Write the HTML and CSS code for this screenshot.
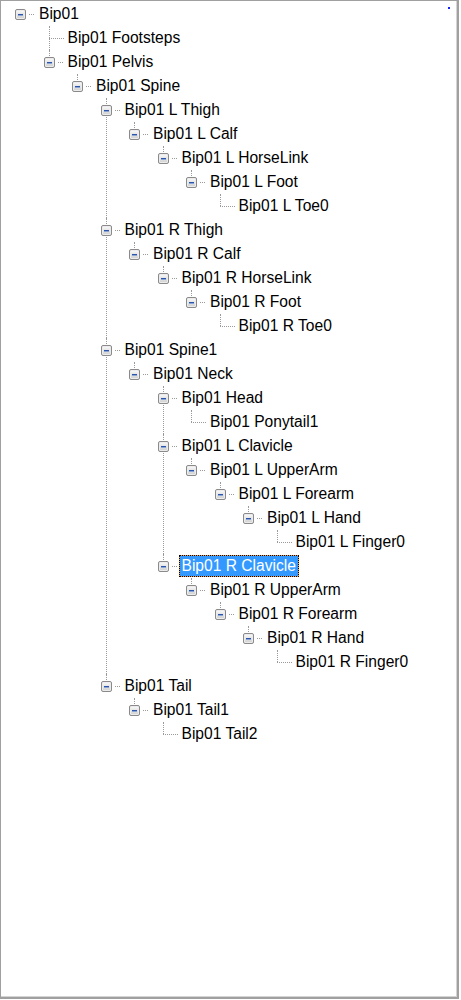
FILE: index.html
```html
<!DOCTYPE html>
<html>
<head>
<meta charset="utf-8">
<link rel="stylesheet" href="styles.css">
</head>
<body>
<div class="panel">
  <span class="marker"></span>
  <ul class="tree">
    <li><div class="row"><span class="box"></span><span class="conn"></span><span class="label">Bip01</span></div>
      <ul>
        <li><div class="row"><span class="stub"></span><span class="label">Bip01 Footsteps</span></div></li>
        <li><div class="row"><span class="box"></span><span class="conn"></span><span class="label">Bip01 Pelvis</span></div>
          <ul>
            <li><div class="row"><span class="box"></span><span class="conn"></span><span class="label">Bip01 Spine</span></div>
              <ul>
                <li><div class="row"><span class="box"></span><span class="conn"></span><span class="label">Bip01 L Thigh</span></div>
                  <ul>
                    <li><div class="row"><span class="box"></span><span class="conn"></span><span class="label">Bip01 L Calf</span></div>
                      <ul>
                        <li><div class="row"><span class="box"></span><span class="conn"></span><span class="label">Bip01 L HorseLink</span></div>
                          <ul>
                            <li><div class="row"><span class="box"></span><span class="conn"></span><span class="label">Bip01 L Foot</span></div>
                              <ul>
                                <li><div class="row"><span class="stub"></span><span class="label">Bip01 L Toe0</span></div></li>
                              </ul>
                            </li>
                          </ul>
                        </li>
                      </ul>
                    </li>
                  </ul>
                </li>
                <li><div class="row"><span class="box"></span><span class="conn"></span><span class="label">Bip01 R Thigh</span></div>
                  <ul>
                    <li><div class="row"><span class="box"></span><span class="conn"></span><span class="label">Bip01 R Calf</span></div>
                      <ul>
                        <li><div class="row"><span class="box"></span><span class="conn"></span><span class="label">Bip01 R HorseLink</span></div>
                          <ul>
                            <li><div class="row"><span class="box"></span><span class="conn"></span><span class="label">Bip01 R Foot</span></div>
                              <ul>
                                <li><div class="row"><span class="stub"></span><span class="label">Bip01 R Toe0</span></div></li>
                              </ul>
                            </li>
                          </ul>
                        </li>
                      </ul>
                    </li>
                  </ul>
                </li>
                <li><div class="row"><span class="box"></span><span class="conn"></span><span class="label">Bip01 Spine1</span></div>
                  <ul>
                    <li><div class="row"><span class="box"></span><span class="conn"></span><span class="label">Bip01 Neck</span></div>
                      <ul>
                        <li><div class="row"><span class="box"></span><span class="conn"></span><span class="label">Bip01 Head</span></div>
                          <ul>
                            <li><div class="row"><span class="stub"></span><span class="label">Bip01 Ponytail1</span></div></li>
                          </ul>
                        </li>
                        <li><div class="row"><span class="box"></span><span class="conn"></span><span class="label">Bip01 L Clavicle</span></div>
                          <ul>
                            <li><div class="row"><span class="box"></span><span class="conn"></span><span class="label">Bip01 L UpperArm</span></div>
                              <ul>
                                <li><div class="row"><span class="box"></span><span class="conn"></span><span class="label">Bip01 L Forearm</span></div>
                                  <ul>
                                    <li><div class="row"><span class="box"></span><span class="conn"></span><span class="label">Bip01 L Hand</span></div>
                                      <ul>
                                        <li><div class="row"><span class="stub"></span><span class="label">Bip01 L Finger0</span></div></li>
                                      </ul>
                                    </li>
                                  </ul>
                                </li>
                              </ul>
                            </li>
                          </ul>
                        </li>
                        <li><div class="row"><span class="box"></span><span class="conn"></span><span class="label selected">Bip01 R Clavicle</span></div>
                          <ul>
                            <li><div class="row"><span class="box"></span><span class="conn"></span><span class="label">Bip01 R UpperArm</span></div>
                              <ul>
                                <li><div class="row"><span class="box"></span><span class="conn"></span><span class="label">Bip01 R Forearm</span></div>
                                  <ul>
                                    <li><div class="row"><span class="box"></span><span class="conn"></span><span class="label">Bip01 R Hand</span></div>
                                      <ul>
                                        <li><div class="row"><span class="stub"></span><span class="label">Bip01 R Finger0</span></div></li>
                                      </ul>
                                    </li>
                                  </ul>
                                </li>
                              </ul>
                            </li>
                          </ul>
                        </li>
                      </ul>
                    </li>
                  </ul>
                </li>
                <li><div class="row"><span class="box"></span><span class="conn"></span><span class="label">Bip01 Tail</span></div>
                  <ul>
                    <li><div class="row"><span class="box"></span><span class="conn"></span><span class="label">Bip01 Tail1</span></div>
                      <ul>
                        <li><div class="row"><span class="stub"></span><span class="label">Bip01 Tail2</span></div></li>
                      </ul>
                    </li>
                  </ul>
                </li>
              </ul>
            </li>
          </ul>
        </li>
      </ul>
    </li>
  </ul>
</div>
</body>
</html>
```
FILE: styles.css
```css
html, body {
  margin: 0;
  padding: 0;
  background: #fff;
}

.panel {
  position: relative;
  box-sizing: border-box;
  width: 459px;
  height: 999px;
  border: 1px solid #a0a0a0;
  border-right-width: 2px;
  border-bottom-width: 2px;
  box-shadow: inset -1px -1px 0 #d4d4d4;
  background: #fff;
  padding: 1px 0 0 14px;
  font-family: "Liberation Sans", Arial, sans-serif;
  font-size: 15.6px;
  color: #000;
}

.marker {
  position: absolute;
  left: 447px;
  top: 6px;
  width: 2px;
  height: 2px;
  background: #1020ff;
}

.tree, .tree ul {
  list-style: none;
  margin: 0;
  padding: 0;
}

.tree ul {
  padding-left: 28.5px;
}

.tree li {
  position: relative;
}

.tree ul > li::before {
  content: "";
  position: absolute;
  left: 5px;
  top: 0;
  bottom: 0;
  border-left: 1px dotted #9a9a9a;
}

.tree ul > li:last-child::before {
  bottom: auto;
  height: 12px;
}

.row {
  position: relative;
  display: flex;
  align-items: center;
  height: 24px;
}

.box {
  position: relative;
  z-index: 1;
  box-sizing: border-box;
  width: 11px;
  height: 11px;
  border: 1px solid #8a8a8a;
  border-radius: 2px;
  background: linear-gradient(#fafafa, #cfcfcf);
  box-shadow: inset 0 0 0 1px #ececec;
  margin-top: 1px;
}

.box::after {
  content: "";
  position: absolute;
  left: 2px;
  top: 4px;
  width: 5px;
  height: 1px;
  background: #2a55a8;
  box-shadow: 0 1px 0 #8aa4d6;
}

.conn {
  width: 5px;
  margin-left: 3px;
  border-top: 1px dotted #9a9a9a;
}

.stub {
  width: 15px;
  margin-left: 5px;
  border-top: 1px dotted #9a9a9a;
}

.label {
  margin-left: 2px;
  padding: 0 2px;
  border: 1px solid transparent;
  line-height: 20px;
  white-space: nowrap;
}

.stub + .label {
  margin-left: 1px;
}

.label.selected {
  color: #fff;
  border: 1px dotted #000;
  background: linear-gradient(#3399ff, #3399ff) padding-box,
              linear-gradient(#f0a040, #f0a040) border-box;
}
```
